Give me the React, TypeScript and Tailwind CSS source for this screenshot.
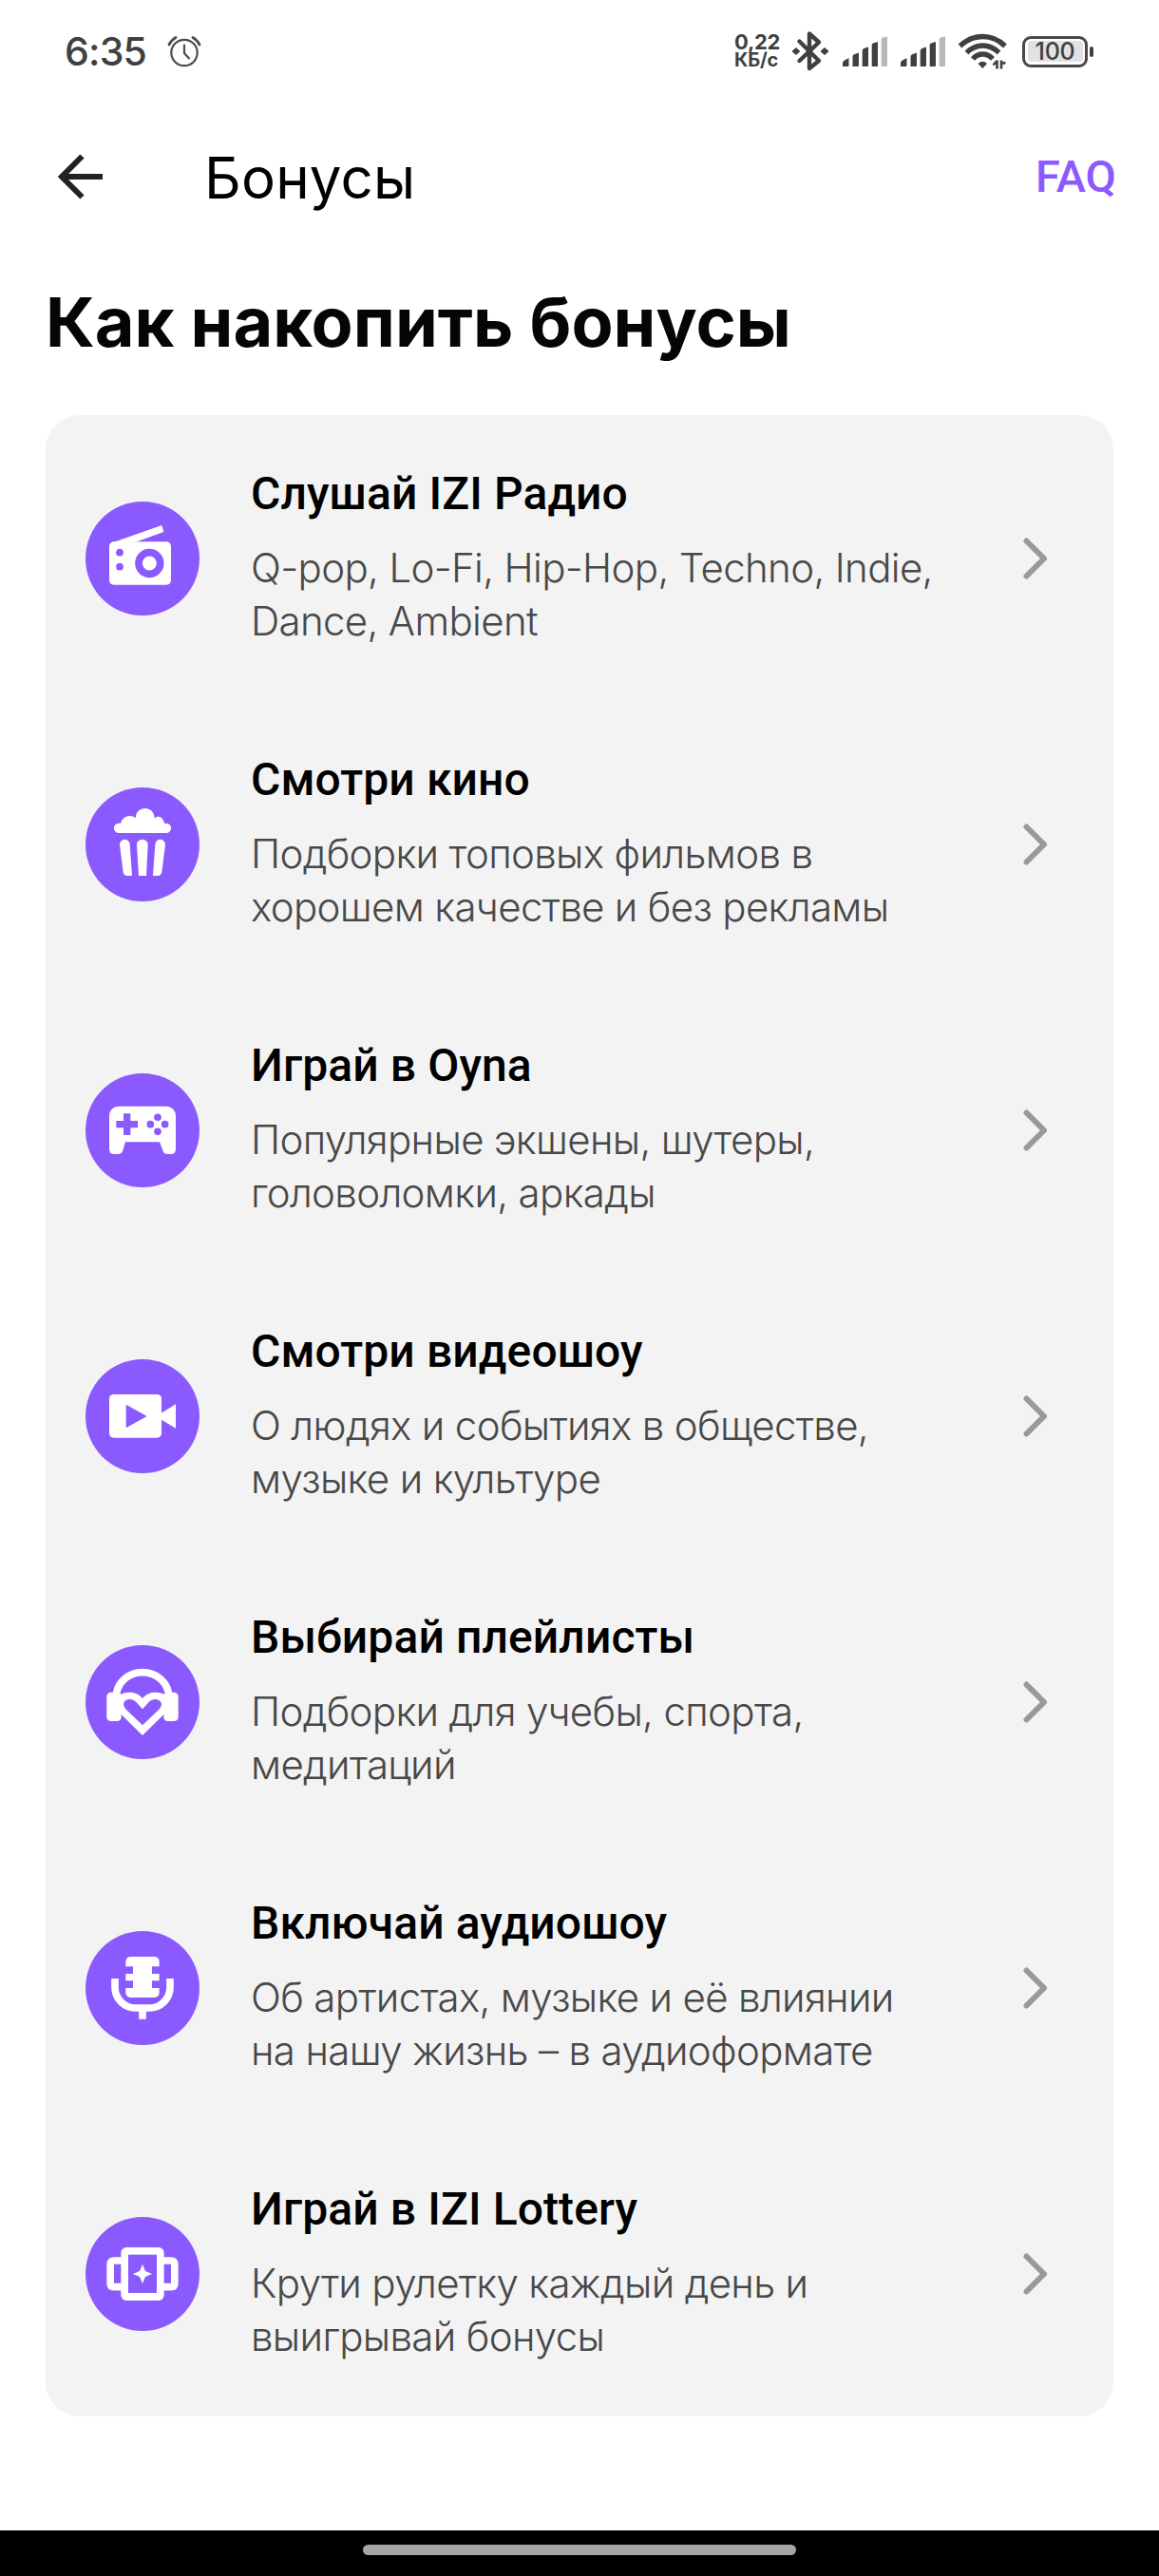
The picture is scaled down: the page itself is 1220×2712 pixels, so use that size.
import type { ReactNode } from 'react';

const PURPLE = '#8b5aff';

const RadioIcon = (
  <>
    <path d="M81 131 L241 75 L247 96 L158 128 Z" fill="#fff" />
    <rect x="75" y="127" width="195" height="136" rx="14" fill="#fff" />
    <circle cx="202" cy="195" r="34" fill="#fff" stroke={PURPLE} strokeWidth="23" />
    <circle cx="108" cy="161" r="11.5" fill={PURPLE} />
    <circle cx="108" cy="206" r="11.5" fill={PURPLE} />
  </>
);

const PopcornIcon = (
  <g fill="#fff">
    <path d="M105 144 a15.500 15.500 0 0 1 0 -31 Q108 113 111 114 C116 91 142 83 158 97 C160 56 216 56 218 97 C232 84 247 98 249 114 Q252 113 255 113 a15.500 15.500 0 0 1 0 31 Z" />
    <path d="M108 181 a16 16 0 0 1 32 -1 L147 279 H132 Q121 279 119 268 Z" />
    <path d="M162 181 a17.500 17 0 0 1 35 0 L192 279 H168 Z" />
    <path d="M252 181 a16 16 0 0 0 -32 -1 L213 279 H228 Q239 279 241 268 Z" />
  </g>
);

const GamepadIcon = (
  <>
    <path
      d="M105 104 H255 a30 30 0 0 1 30 30 V241 a14 14 0 0 1 -14 14 H259 Q248 255 245 246 L234 217 H126 L117 246 Q113 255 103 255 H89 a14 14 0 0 1 -14 -14 V134 a30 30 0 0 1 30 -30 Z"
      fill="#fff"
    />
    <path d="M120 127 H142 V150 H165 V172 H142 V195 H120 V172 H97 V150 H120 Z" fill={PURPLE} />
    <g fill={PURPLE}>
      <circle cx="228" cy="139" r="11.500" />
      <circle cx="205" cy="161" r="11.500" />
      <circle cx="251" cy="161" r="11.500" />
      <circle cx="228" cy="184" r="11.500" />
    </g>
  </>
);

const VideoIcon = (
  <>
    <rect x="75" y="111" width="165" height="137" rx="14" fill="#fff" />
    <path d="M238 171 L285 142 V218 L238 190 Z" fill="#fff" />
    <path d="M128 143 L194 180 L128 217 Z" fill={PURPLE} />
  </>
);

const HeadphonesIcon = (
  <>
    <path d="M97 158 C101 116 137 86 180 86 S259 116 263 158" fill="none" stroke="#fff" strokeWidth="23" />
    <rect x="67" y="149" width="46" height="91" rx="13" fill="#fff" />
    <rect x="247" y="149" width="46" height="91" rx="13" fill="#fff" />
    <path
      d="M180 285 L110 216 V156 C132 145 163 147 180 168 C197 147 228 145 250 156 V216 Z"
      fill="#fff"
    />
    <path
      d="M180 253 L128 203 Q120 195 120 187 C122 169 148 166 160 180 L180 202 L200 180 C212 166 238 169 240 187 Q240 195 232 203 Z"
      fill={PURPLE}
    />
  </>
);

const MicIcon = (
  <>
    <path
      d="M142 81 H218 a15 15 0 0 1 15 15 V112 H210 V135 H233 V157 H210 V180 H233 V195 a15 15 0 0 1 -15 15 H142 a15 15 0 0 1 -15 -15 V180 H150 V157 H127 V135 H150 V112 H127 V96 a15 15 0 0 1 15 -15 Z"
      fill="#fff"
    />
    <path
      d="M93 150 V178 a65 65 0 0 0 65 65 H202 a65 65 0 0 0 65 -65 V150 M180 243 V278"
      fill="none"
      stroke="#fff"
      strokeWidth="23"
    />
  </>
);

const LotteryIcon = (
  <>
    <path
      d="M120 138 H90 Q78.500 138 78.500 150 V210 Q78.500 221 90 221 H120 M240 138 H270 Q281.500 138 281.500 150 V210 Q281.500 221 270 221 H240"
      fill="none"
      stroke="#fff"
      strokeWidth="23"
    />
    <rect x="112" y="96" width="136" height="168" rx="17" fill="#fff" />
    <rect x="135" y="119" width="90" height="121" fill={PURPLE} />
    <path d="M180 150 L189 171 L210 180 L189 189 L180 210 L171 189 L150 180 L171 171 Z" fill="#fff" />
  </>
);

const items: { icon: ReactNode; title: string; lines: [string, string] }[] = [
  { icon: RadioIcon, title: 'Слушай IZI Радио', lines: ['Q-pop, Lo-Fi, Hip-Hop, Techno, Indie,', 'Dance, Ambient'] },
  { icon: PopcornIcon, title: 'Смотри кино', lines: ['Подборки топовых фильмов в', 'хорошем качестве и без рекламы'] },
  { icon: GamepadIcon, title: 'Играй в Oyna', lines: ['Популярные экшены, шутеры,', 'головоломки, аркады'] },
  { icon: VideoIcon, title: 'Смотри видеошоу', lines: ['О людях и событиях в обществе,', 'музыке и культуре'] },
  { icon: HeadphonesIcon, title: 'Выбирай плейлисты', lines: ['Подборки для учебы, спорта,', 'медитаций'] },
  { icon: MicIcon, title: 'Включай аудиошоу', lines: ['Об артистах, музыке и её влиянии', 'на нашу жизнь – в аудиоформате'] },
  { icon: LotteryIcon, title: 'Играй в IZI Lottery', lines: ['Крути рулетку каждый день и', 'выигрывай бонусы'] },
];

function Signal() {
  return (
    <svg width="49" height="48" viewBox="0 0 49 48" fill="#404040">
      <path d="M1 40 V36 Q1 34.500 3 33.500 L7.500 31 V39 Q7.500 40 6.500 40 Z" />
      <path d="M11.500 40 V29.500 Q11.500 28 13 27.300 L18 25.500 V39 Q18 40 17 40 Z" />
      <path d="M21.700 40 V23.500 Q21.700 22 23.200 21 L28 19.500 V39 Q28 40 27 40 Z" />
      <path d="M31.700 40 V17.500 Q31.700 16 33 15.500 L38 14 V39 Q38 40 37 40 Z" />
      <path d="M41.700 40 V11.500 Q41.700 10 43 9.500 L48 8.500 V39 Q48 40 47 40 Z" fill="#b8b8b8" />
    </svg>
  );
}

function StatusBar() {
  return (
    <div className="flex h-[108px] items-center pr-[69px] pl-[68px] text-[#404040]">
      <span className="w-[108px] text-[41px] leading-none font-medium tracking-[-0.8px]">6:35</span>
      <svg width="36" height="36" viewBox="0 0 36 36" fill="none" stroke="#4d4d4d" strokeWidth="2.2" strokeLinecap="round">
        <circle cx="18" cy="19.500" r="13.700" />
        <path d="M18 11.500 V20 L23 25.500" />
        <path d="M2 11 Q4.500 6 9 3.500 M34 11 Q31.500 6 27 3.500" strokeWidth="2.800" />
      </svg>
      <div className="ml-auto flex items-center">
        <div className="flex w-[50px] flex-col font-bold">
          <span className="text-[22px] leading-[19px] tracking-[-0.3px]">0,22</span>
          <span className="text-[20px] leading-[19px] tracking-[-0.2px]">КБ/с</span>
        </div>
        <svg className="ml-[10px]" width="40" height="48" viewBox="0 0 40 48" fill="none">
          <path
            d="M8.500 13.500 L29 34 L19 42 V5.500 L29 14.500 L8.500 34"
            stroke="#404040"
            strokeWidth="4.400"
            strokeLinecap="round"
            strokeLinejoin="round"
          />
          <path d="M5 20.500 L8.800 24 L5 27.500 L1 24 Z M35 20.500 L39 24 L35 27.500 L31 24 Z" fill="#404040" stroke="#404040" strokeLinejoin="round" />
        </svg>
        <div className="ml-[13px] flex gap-[12px]">
          <Signal />
          <Signal />
        </div>
        <svg className="ml-[12px]" width="54" height="48" viewBox="0 0 54 48" fill="none" stroke="#404040" strokeWidth="5.400">
          <path d="M2.500 18.500 Q13 8.500 26.500 8.500 T50 18.500" />
          <path d="M9.500 25.500 Q17 18 26.500 18 T43.500 25.500" />
          <path d="M16 32 Q20.500 27 26.500 27 T37 32" />
          <path d="M21.500 37 Q26.500 32.500 31 37 L26.300 42 Z" fill="#404040" stroke="none" />
          <path d="M41.500 33.500 V42.500 M46 33.500 V42.500 M41.500 34 L37.500 38.500 M46 37 L50.500 36" strokeWidth="2.600" />
        </svg>
        <div className="ml-[14px] flex items-center gap-[2px]">
          <div className="flex h-[33px] w-[69px] rounded-[9px] border-[3px] border-[#484848] p-[2.500px]">
            <div className="flex flex-1 items-center justify-center rounded-[4px] bg-[#e2e2e2] text-[25px] leading-none font-medium tracking-[-0.3px]">100</div>
          </div>
          <div className="h-[11px] w-[4px] rounded-[2px] bg-[#404040]" />
        </div>
      </div>
    </div>
  );
}

export default function App() {
  return (
    <div className="flex h-[2712px] w-[1220px] flex-col bg-white font-['Inter','Noto_Sans',sans-serif] text-black">
      <StatusBar />
      <header className="flex h-[156px] items-center pr-[45px] pl-[60px]">
        <svg width="50" height="50" viewBox="0 0 50 50" fill="none" stroke="#222" strokeWidth="6">
          <path d="M48 25 H5 M26.500 3.500 L5 25 L26.500 46.500" />
        </svg>
        <h1 className="mt-[1px] ml-[105px] text-[60px] leading-none tracking-[0.2px]">Бонусы</h1>
        <span className="mb-[2px] ml-auto font-['Roboto',sans-serif] text-[47px] leading-none font-medium text-[#8b5aff]">FAQ</span>
      </header>
      <h2 className="h-[173px] pl-[48px] text-[72px] leading-[150px] font-bold whitespace-nowrap text-[#050505]">Как накопить бонусы</h2>
      <ul className="mx-[48px] flex h-[2107px] flex-col rounded-[36px] bg-[#f3f3f3]">
        {items.map((item) => (
          <li key={item.title} className="flex h-[301px] items-center pr-[67px] pl-[42px]">
            <svg width="120" height="120" viewBox="0 0 360 360" className="shrink-0">
              <circle cx="180" cy="180" r="180" fill={PURPLE} />
              {item.icon}
            </svg>
            <div className="mb-[1px] ml-[54px] flex-1 whitespace-nowrap">
              <h3 className="font-['Roboto',sans-serif] text-[48px] leading-[56px] font-medium tracking-[0.1px]">{item.title}</h3>
              <p className="mt-[22px] text-[42px] leading-[56px] font-light tracking-[-0.66px] text-[#484848]">
                {item.lines[0]}
                <br />
                {item.lines[1]}
              </p>
            </div>
            <svg width="30" height="48" viewBox="0 0 30 48" fill="none" stroke="#999" strokeWidth="6" strokeLinecap="round" strokeLinejoin="round">
              <path d="M5.500 5.500 L24 24 L5.500 42.500" />
            </svg>
          </li>
        ))}
      </ul>
      <div className="mt-auto flex h-[48px] justify-center bg-black pt-[15px]">
        <div className="h-[11px] w-[456px] rounded-full bg-[#a6a6a6]" />
      </div>
    </div>
  );
}
